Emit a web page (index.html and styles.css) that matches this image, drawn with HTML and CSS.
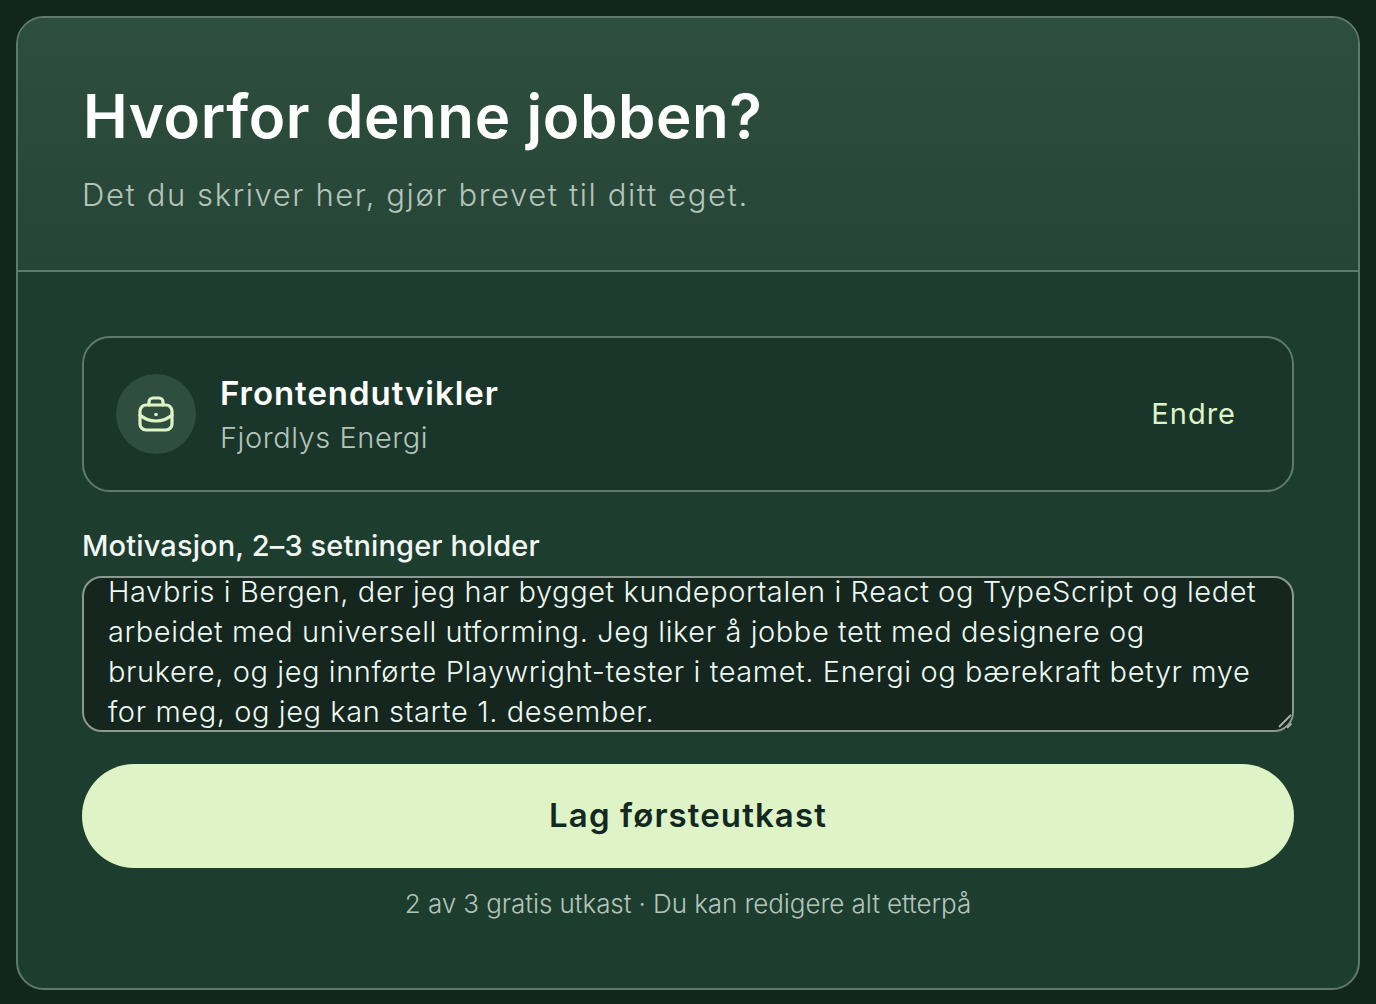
FILE: index.html
```html
<!DOCTYPE html>
<html lang="no">
<head>
<meta charset="utf-8">
<title>Hvorfor denne jobben?</title>
<link rel="stylesheet" href="styles.css">
</head>
<body>
<main class="panel">
  <header class="panel-head">
    <h1 class="title">Hvorfor denne jobben?</h1>
    <p class="subtitle">Det du skriver her, gjør brevet til ditt eget.</p>
  </header>
  <section class="panel-body">
    <div class="job">
      <div class="job-icon">
        <svg width="40" height="40" viewBox="0 0 40 40" fill="none" stroke="currentColor" stroke-width="3.2" stroke-linecap="round" stroke-linejoin="round">
          <rect x="4" y="11" width="32" height="25" rx="6"/>
          <path d="M13 11V8a4 4 0 0 1 4-4h6a4 4 0 0 1 4 4v3"/>
          <path d="M4 21c9 8 23 8 32 0"/>
          <path d="M20 20.5h.01" stroke-width="3.6"/>
        </svg>
      </div>
      <div class="job-text">
        <div class="job-title">Frontendutvikler</div>
        <div class="job-company">Fjordlys Energi</div>
      </div>
      <button class="job-change" type="button">Endre</button>
    </div>
    <label class="field-label" for="motivation">Motivasjon, 2–3 setninger holder</label>
    <div class="field-wrap">
      <textarea class="field" id="motivation" wrap="off">Jeg er frontendutvikler og jobber i dag hos
Havbris i Bergen, der jeg har bygget kundeportalen i React og TypeScript og ledet
arbeidet med universell utforming. Jeg liker å jobbe tett med designere og
brukere, og jeg innførte Playwright-tester i teamet. Energi og bærekraft betyr mye
for meg, og jeg kan starte 1. desember.</textarea>
      <svg class="grip" width="16" height="16" viewBox="0 0 16 16" fill="none" stroke-linecap="butt">
        <path d="M2.5 14.5 15 2M10 15.5 15.5 10" stroke="#0c1a14" stroke-width="2"/>
        <path d="M3 13 15 1M11 14 15.5 9.5" stroke="#a9b0ac" stroke-width="2"/>
      </svg>
    </div>
    <button class="submit" type="button">Lag førsteutkast</button>
    <p class="note">2 av 3 gratis utkast · Du kan redigere alt etterpå</p>
  </section>
</main>
<script src="script.js"></script>
</body>
</html>
```

FILE: styles.css
```css
* { box-sizing: border-box; }
html, body { height: 100%; }
body {
  margin: 0;
  padding: 16px 16px 14px;
  background: #12261c;
  font-family: Inter, "Liberation Sans", sans-serif;
  overflow: hidden;
}
.panel {
  height: 974px;
  border: 2px solid #5d7a6c;
  border-radius: 28px;
  background: #1d3d2f;
  overflow: hidden;
}
.panel-head {
  height: 254px;
  padding: 64px 64px 0 65px;
  border-bottom: 2px solid #5d7a6c;
  background: linear-gradient(180deg, #2e4e3f 0%, #264536 100%);
}
.title {
  margin: 0;
  font-size: 60px;
  line-height: 68px;
  font-weight: 600;
  letter-spacing: 0.6px;
  color: #fff;
}
.subtitle {
  margin: 25px 0 0 -1px;
  font-size: 31px;
  line-height: 40px;
  font-weight: 300;
  letter-spacing: 1.6px;
  color: #b4c4bb;
}
.panel-body { padding: 64px 64px 0; }
.job {
  display: flex;
  align-items: center;
  gap: 24px;
  height: 156px;
  padding: 0 56px 0 32px;
  border: 2px solid #5d7a6c;
  border-radius: 28px;
  background: #1a3529;
}
.job-icon {
  display: flex;
  align-items: center;
  justify-content: center;
  width: 80px;
  height: 80px;
  border-radius: 50%;
  background: #2f4e40;
  color: #def4c6;
}
.job-text { flex: 1; }
.job-title {
  margin-top: 3px;
  font-size: 33px;
  line-height: 40px;
  font-weight: 600;
  letter-spacing: 0.95px;
  color: #fff;
}
.job-company {
  margin-top: 5px;
  font-size: 29px;
  line-height: 40px;
  font-weight: 300;
  letter-spacing: 0.55px;
  color: #b4c4bb;
}
.job-change {
  padding: 0;
  border: 0;
  background: none;
  font: 400 29px/40px Inter, "Liberation Sans", sans-serif;
  letter-spacing: 1px;
  color: #def4c6;
}
.field-label {
  display: block;
  margin-top: 34px;
  font-size: 29px;
  line-height: 40px;
  font-weight: 500;
  letter-spacing: 0.13px;
  color: #f2f6f3;
}
.field-wrap {
  position: relative;
  margin-top: 10px;
}
.field {
  display: block;
  width: 100%;
  height: 156px;
  padding: 0 24px;
  border: 2px solid #8a9a92;
  border-radius: 20px;
  background: #14261e;
  font: 300 29px/40px Inter, "Liberation Sans", sans-serif;
  letter-spacing: 0.58px;
  color: #eef8f2;
  overflow: hidden;
  resize: none;
  outline: none;
}
.grip {
  position: absolute;
  right: 2px;
  bottom: 2px;
  pointer-events: none;
}
.submit {
  display: block;
  width: 100%;
  height: 104px;
  margin-top: 32px;
  padding-bottom: 4px;
  border: 0;
  border-radius: 52px;
  background: #def4c6;
  font: 600 33px/40px Inter, "Liberation Sans", sans-serif;
  letter-spacing: 1.1px;
  color: #13281f;
}
.note {
  margin: 20px 0 0;
  text-align: center;
  font-size: 26px;
  line-height: 32px;
  font-weight: 300;
  letter-spacing: -0.08px;
  color: #b4c4bb;
}
```

FILE: script.js
```js
document.getElementById("motivation").scrollTop = 46;
```
